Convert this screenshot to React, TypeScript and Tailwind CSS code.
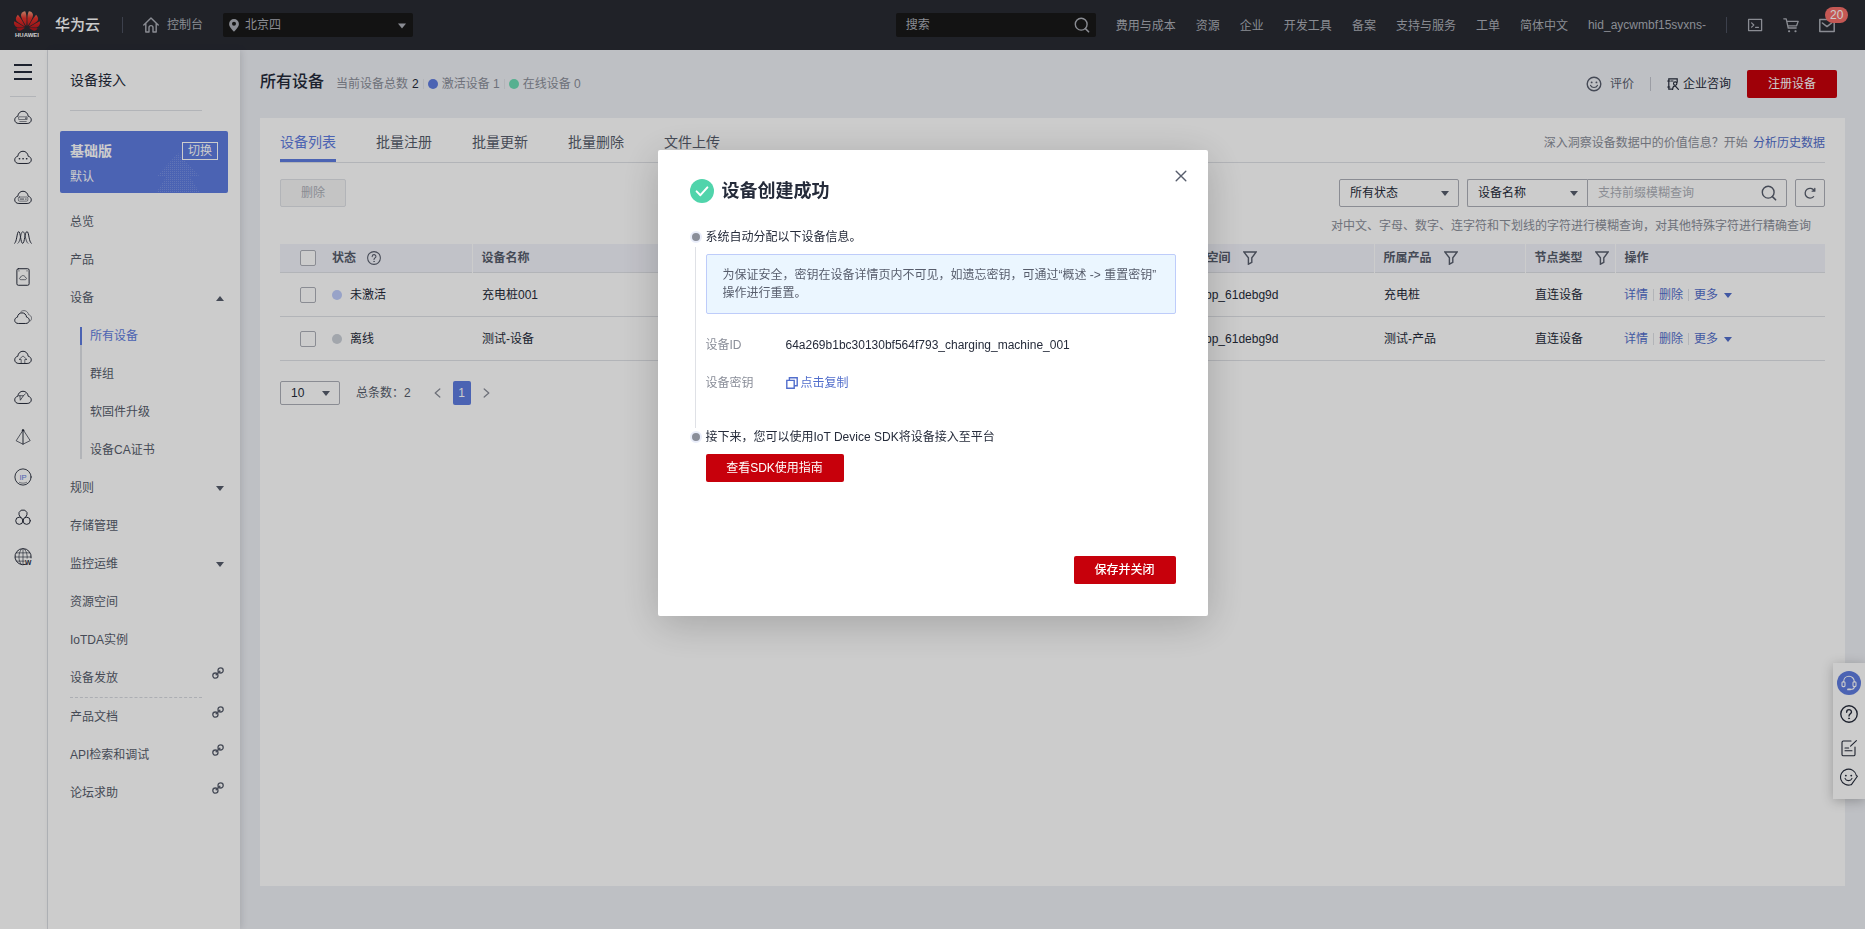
import { useState } from "react";
import type { ReactNode } from "react";
import { SiHuawei } from "react-icons/si";

interface IconProps {
  className?: string;
  children: ReactNode;
  box?: string;
}

function Icon({ className = "w-[18px] h-[18px]", children, box = "0 0 20 20" }: IconProps) {
  return (
    <svg
      viewBox={box}
      className={`${className} flex-shrink-0`}
      fill="none"
      stroke="currentColor"
      strokeWidth="1.1"
      strokeLinecap="round"
      strokeLinejoin="round"
      aria-hidden="true"
    >
      {children}
    </svg>
  );
}

function Caret({ up = false, className = "w-2 h-[5px]" }: { up?: boolean; className?: string }) {
  return (
    <svg viewBox="0 0 8 5" className={`${className} flex-shrink-0`} fill="currentColor" aria-hidden="true">
      <path d={up ? "M0 5 L4 0 L8 5Z" : "M0 0 L4 5 L8 0Z"} />
    </svg>
  );
}

const CLOUD = "M5 17.2 C2.6 17.2 0.8 15.4 0.8 13.2 C0.8 11.2 2.2 9.6 4.2 9.2 C4.6 5.8 7 3.6 10 3.6 C13 3.6 15.4 5.8 15.8 9.2 C17.8 9.6 19.2 11.2 19.2 13.2 C19.2 15.4 17.4 17.2 15 17.2 Z";

function SearchIcon() {
  return (
    <Icon className="w-4 h-4" box="0 0 16 16">
      <circle cx="7.2" cy="7.2" r="5.9" strokeWidth="1.4" />
      <path d="M11.4 11.6 L14.6 14.8" strokeWidth="1.6" />
    </Icon>
  );
}

function FilterIcon() {
  return (
    <Icon className="w-[14px] h-[14px]" box="0 0 14 14">
      <path d="M0.8 1 H13.2 L8.8 6.8 V11.4 L5.4 13.2 V6.8 Z" strokeWidth="1.4" strokeLinejoin="miter" />
    </Icon>
  );
}

function HelpIcon({ className = "w-[14px] h-[14px]" }: { className?: string }) {
  return (
    <Icon className={className} box="0 0 16 16">
      <circle cx="8" cy="8" r="7.3" strokeWidth="1.2" />
      <path d="M5.9 6.4 C5.9 3.4 10.2 3.5 10.2 6.2 C10.2 7.8 8 7.9 8 9.8" strokeWidth="1.2" />
      <circle cx="8" cy="11.9" r="0.5" fill="currentColor" strokeWidth="0.6" />
    </Icon>
  );
}

function LinkIcon() {
  return (
    <Icon className="w-3 h-3" box="0 0 12 12">
      <circle cx="3.4" cy="8.6" r="2.6" strokeWidth="1.3" />
      <circle cx="8.6" cy="3.4" r="2.6" strokeWidth="1.3" />
      <path d="M4.2 7.8 L7.8 4.2" strokeWidth="1.5" />
    </Icon>
  );
}

const railIcons: { name: string; drawing: ReactNode }[] = [
  {
    name: "弹性云服务器",
    drawing: (
      <>
        <path d={CLOUD} />
        <path d="M5.6 9.8 H14.6 V12.8 H5.6 Z M6.4 15 H13.6" strokeWidth="0.6" />
        <path d="M12.8 11.3 h0.8" />
      </>
    ),
  },
  {
    name: "云耀服务器",
    drawing: (
      <>
        <path d={CLOUD} />
        <path d="M6 12 h0.2 M10 12 h0.2 M14 12 h0.2" strokeWidth="1.8" />
      </>
    ),
  },
  {
    name: "裸金属服务器",
    drawing: (
      <>
        <path d={CLOUD} />
        <rect x="4.8" y="10" width="10.6" height="4.6" rx="1.2" strokeWidth="0.6" />
        <path d="M6.8 12.3 h4 M12.8 12.3 h0.8" strokeWidth="0.9" />
      </>
    ),
  },
  {
    name: "弹性伸缩",
    drawing: (
      <>
        <path d="M0.8 17 C3.2 16 3.2 4 5.2 4 C7.4 4 7.2 17 9.6 17 C12 17 11.8 4 14.4 4 C16.8 4 16.4 16 19.2 17" />
        <path d="M4.4 17 C7.6 15 7.2 4 9.8 4 C12.6 4 12.4 15 15.4 17" strokeWidth="0.8" />
      </>
    ),
  },
  {
    name: "云硬盘",
    drawing: (
      <>
        <rect x="3.2" y="0.8" width="13.6" height="18.4" rx="1.6" />
        <path d="M7.6 13 C5.6 13 5.6 10.6 7.4 10.4 C7.8 7.8 12 7.8 12.6 10.4 C14.4 10.6 14.4 13 12.4 13 Z" strokeWidth="0.7" />
        <path d="M5.4 3.2 h0.2 M14.4 3.2 h0.2" strokeWidth="0.9" />
      </>
    ),
  },
  {
    name: "对象存储",
    drawing: (
      <>
        <path d="M4.4 17.2 C2.4 17.2 0.8 15.7 0.8 13.7 C0.8 11.9 2 10.6 3.8 10.2 C4.2 7.2 6.2 5.4 8.9 5.4 C11.5 5.4 13.6 7.2 14 10.2 C15.8 10.6 17 11.9 17 13.7 C17 15.7 15.4 17.2 13.4 17.2 Z" />
        <path d="M7.4 4.4 C10 1.2 15.4 3 16.2 7.4 C20 8.4 20.6 13 18 14.6" strokeWidth="0.6" />
      </>
    ),
  },
  {
    name: "云备份",
    drawing: (
      <>
        <path d={CLOUD} />
        <path d="M8 16.6 V12.8 H5.6 L10 8.8 L14.4 12.8 H12 V16.6" strokeWidth="0.7" />
      </>
    ),
  },
  {
    name: "内容分发",
    drawing: (
      <>
        <path d={CLOUD} />
        <path d="M5.4 8.6 L10.4 8.6 L7 13.6 L6.6 8.8 M10.4 8.6 L12.6 6.6" strokeWidth="0.8" />
      </>
    ),
  },
  {
    name: "虚拟私有云",
    drawing: (
      <>
        <path d="M10 2.4 L2.4 14.2 L10 18 L17.6 14.2 Z" strokeWidth="0.8" />
        <path d="M10 2.4 V18" strokeWidth="1.1" />
        <circle cx="10" cy="2.6" r="0.8" fill="currentColor" />
      </>
    ),
  },
  {
    name: "弹性公网",
    drawing: (
      <>
        <circle cx="10" cy="10" r="9" strokeWidth="1" />
        <path d="M6 16 C8 17.2 12 17.2 14 16" strokeWidth="0.6" />
        <text x="10" y="13" textAnchor="middle" fontSize="8.5" fill="#5e7ce0" stroke="none">
          IP
        </text>
      </>
    ),
  },
  {
    name: "云容器",
    drawing: (
      <>
        <path d="M7.4 10.6 L5.6 7.6 V5 L8 2.4 H12 L14.4 5 V7.6 L12.6 10.6" />
        <circle cx="5.9" cy="14.2" r="4" />
        <circle cx="14.1" cy="14.2" r="4" />
      </>
    ),
  },
  {
    name: "域名注册",
    drawing: (
      <>
        <path d="M13 18.2 A9 9 0 1 1 19 11" />
        <path d="M10 1.2 V18.4 M1.4 10 H18.8 M3 5.4 H17 M3 14.6 H11.4" strokeWidth="0.7" />
        <path d="M8 1.6 C4.6 6 4.6 14 8 18.2 M12 1.6 C14 4.4 15 8 14.6 11.4" strokeWidth="0.7" />
        <text x="12.2" y="18.6" fontSize="7.5" fontWeight="bold" fill="currentColor" stroke="none">
          W
        </text>
      </>
    ),
  },
];

const topLinks = ["费用与成本", "资源", "企业", "开发工具", "备案", "支持与服务", "工单", "简体中文"];

function TopBar() {
  return (
    <header className="h-[50px] flex-shrink-0 bg-[#282b33] text-[#adb0b8] flex items-center">
      <a href="#" className="ml-[14px] w-[26px] flex flex-col items-center text-white" aria-label="HUAWEI">
        <svg className="absolute w-0 h-0" aria-hidden="true">
          <defs>
            <linearGradient id="petal" x1="0" y1="0" x2="0" y2="1">
              <stop offset="0" stopColor="#f0a080" />
              <stop offset="0.35" stopColor="#e4322b" />
              <stop offset="1" stopColor="#b5121b" />
            </linearGradient>
          </defs>
        </svg>
        <SiHuawei className="w-[26px] h-5" viewBox="0 3 24 18" fill="url(#petal)" />
        <span className="text-[6px] leading-[8px] font-bold text-white">HUAWEI</span>
      </a>
      <span className="ml-[15px] text-[15px] font-medium text-white whitespace-nowrap">华为云</span>
      <span className="ml-[22px] w-px h-4 bg-[#4c5160]" />
      <a href="#" className="ml-5 flex items-center gap-2 whitespace-nowrap">
        <Icon className="w-4 h-4" box="0 0 16 16">
          <path d="M0.8 8 L8 1 L15.2 8 M2.8 6.4 V15 H6 V10.6 A2 2 0 0 1 10 10.6 V15 H13.2 V6.4" strokeWidth="1.4" />
        </Icon>
        控制台
      </a>
      <div className="relative ml-5 w-[190px]">
        <svg viewBox="0 0 10 13" className="absolute left-[6px] top-[6px] w-[10px] h-[13px]" fill="#adb0b8" aria-hidden="true">
          <path fillRule="evenodd" d="M5 0 A4.9 4.9 0 0 0 0.1 4.9 C0.1 8 3.4 10.6 5 12.8 C6.6 10.6 9.9 8 9.9 4.9 A4.9 4.9 0 0 0 5 0 Z M5 2.8 A2 2 0 1 1 5 6.8 A2 2 0 1 1 5 2.8 Z" />
        </svg>
        <select aria-label="区域" className="appearance-none w-full h-6 pl-[22px] rounded-xs bg-[#181818] outline-none">
          <option>北京四</option>
        </select>
        <Caret className="absolute right-[7px] top-[10px] w-2 h-[6px]" />
      </div>

      <div className="ml-auto w-[200px] h-6 pl-[10px] pr-1.5 bg-[#181818] rounded-xs flex items-center">
        <input aria-label="搜索" placeholder="搜索" className="flex-1 min-w-0 bg-transparent outline-none placeholder:text-[#adb0b8]" />
        <SearchIcon />
      </div>
      <nav className="ml-5 flex items-center gap-5 whitespace-nowrap">
        {topLinks.map((link) => (
          <a key={link} href="#" className="pt-[2px]">
            {link}
          </a>
        ))}
        <a href="#">hid_aycwmbf15svxns-</a>
      </nav>
      <span className="ml-5 w-px h-4 bg-[#4c5160]" />
      <div className="flex items-center ml-5 mr-[30px] gap-5">
        <button aria-label="命令行" className="w-4">
          <Icon className="w-4 h-4" box="0 0 16 16">
            <rect x="1.6" y="2.4" width="13" height="11.2" strokeWidth="1.3" />
            <path d="M4.6 5.8 L6.8 8 L4.6 10.2 M8.6 10.4 H11.4" strokeWidth="1.2" />
          </Icon>
        </button>
        <button aria-label="购物车" className="w-4">
          <Icon className="w-4 h-4" box="0 0 16 16">
            <path d="M0.8 1.8 H3.2 L5.2 11 H13.2 M3.8 4.4 H15.2 L13.6 8.8 H4.8" strokeWidth="1.3" />
            <path d="M6 14.2 h0.2 M12.4 14.2 h0.2" strokeWidth="2" />
          </Icon>
        </button>
        <button aria-label="消息" className="relative w-4">
          <Icon className="w-4 h-4" box="0 0 16 16">
            <path d="M0.8 2.6 H15.2 V14.4 H0.8 Z M3.4 6 L8 9.6 L12.6 6" strokeWidth="1.5" />
          </Icon>
          <span className="absolute left-[6px] -top-[10px] h-4 px-[5px] rounded-full bg-[#f66f6a] text-white text-xs leading-4">20</span>
        </button>
      </div>
    </header>
  );
}

function Rail() {
  return (
    <aside className="w-12 flex-shrink-0 pr-px bg-white border-r border-[#dfe1e6] flex flex-col items-center text-[#252b3a]">
      <button aria-label="菜单" className="mt-[14px] w-[18px] flex flex-col gap-[5px]">
        <span className="h-[2px] w-full bg-[#252b3a]" />
        <span className="h-[2px] w-full bg-[#252b3a]" />
        <span className="h-[2px] w-full bg-[#252b3a]" />
      </button>
      <span className="mt-4 w-[26px] h-px bg-[#dfe1e6]" />
      <div className="mt-[11px] flex flex-col gap-[22px]">
        {railIcons.map(({ name, drawing }) => (
          <button key={name} aria-label={name} className="w-[18px] h-[18px]">
            <Icon>{drawing}</Icon>
          </button>
        ))}
      </div>
    </aside>
  );
}

interface MenuItemProps {
  label: string;
  caret?: "up" | "down";
  external?: boolean;
}

function MenuItem({ label, caret, external }: MenuItemProps) {
  return (
    <a href="#" className="h-[38px] pr-1 flex items-center justify-between">
      {label}
      {caret && <Caret up={caret === "up"} />}
      {external && (
        <span className="self-start mt-2">
          <LinkIcon />
        </span>
      )}
    </a>
  );
}

const deviceMenu = ["群组", "软固件升级", "设备CA证书"];

function SideMenu() {
  return (
    <aside className="relative w-48 flex-shrink-0 bg-white shadow-[2px_0_6px_rgba(37,43,58,0.12)] text-[#575d6c]">
      <h2 className="mt-[20px] ml-[22px] text-sm text-[#252b3a]">设备接入</h2>
      <div className="mt-5 ml-[22px] w-[132px] h-px bg-[#dfe1e6]" />
      <div className="relative mt-5 mx-3 h-[62px] px-[10px] rounded-xs bg-[#5e7ce0] text-white overflow-hidden">
        <svg viewBox="0 0 44 40" className="absolute right-[28px] bottom-0 w-11 h-10" aria-hidden="true">
          <defs>
            <pattern id="dots" width="2" height="2" patternUnits="userSpaceOnUse">
              <rect width="1" height="1" fill="#fff" opacity="0.16" />
            </pattern>
          </defs>
          <path d="M22 0 L44 24 H34 L44 40 H0 L10 24 H0 Z" fill="url(#dots)" />
        </svg>
        <div className="relative pt-[11px] flex items-center justify-between">
          <span className="text-sm leading-[18px] font-bold">基础版</span>
          <button className="w-9 h-[18px] border border-white leading-4">切换</button>
        </div>
        <p className="mt-2 leading-[18px]">默认</p>
      </div>
      <nav className="mt-[10px] ml-[22px] mr-3">
        <MenuItem label="总览" />
        <MenuItem label="产品" />
        <MenuItem label="设备" caret="up" />
        <div className="my-[10px] ml-[10px] border-l-2 border-[#dfe1e6] flex flex-col gap-5 leading-[18px]">
          <a href="#" className="-ml-[2px] border-l-2 border-[#5e7ce0] pl-2 text-[#5e7ce0]">
            所有设备
          </a>
          {deviceMenu.map((item) => (
            <a key={item} href="#" className="pl-2">
              {item}
            </a>
          ))}
        </div>
        <MenuItem label="规则" caret="down" />
        <MenuItem label="存储管理" />
        <MenuItem label="监控运维" caret="down" />
        <MenuItem label="资源空间" />
        <MenuItem label="IoTDA实例" />
        <MenuItem label="设备发放" external />
        <div className="w-[132px] border-t border-dashed border-[#d8dae0]" />
        <MenuItem label="产品文档" external />
        <MenuItem label="API检索和调试" external />
        <MenuItem label="论坛求助" external />
      </nav>
    </aside>
  );
}

function PageTitle() {
  return (
    <div className="h-[68px] pr-2 flex items-center justify-between">
      <div className="flex items-center text-[#8a8e99]">
        <h1 className="text-base font-medium text-[#252b3a] mr-3 pb-1">所有设备</h1>
        当前设备总数
        <span className="ml-1 text-[#252b3a]">2</span>
        <span className="mx-1 w-px h-[10px] bg-[#dfe1e6]" />
        <span className="mr-1 w-[10px] h-[10px] rounded-full bg-[#5e7ce0]" />
        激活设备 1
        <span className="mx-1 w-px h-[10px] bg-[#dfe1e6]" />
        <span className="mr-1 w-[10px] h-[10px] rounded-full bg-[#6cdcb4]" />
        在线设备 0
      </div>
      <div className="flex items-center text-[#575d6c]">
        <a href="#" className="flex items-center gap-2">
          <Icon className="w-4 h-4" box="0 0 16 16">
            <circle cx="8" cy="8" r="6.8" strokeWidth="1.4" />
            <path d="M4.6 9.4 C5.8 12.2 10.2 12.2 11.4 9.4" strokeWidth="1.2" />
            <path d="M5.6 6.4 h0.1 M10.4 6.4 h0.1" strokeWidth="1.8" />
          </Icon>
          评价
        </a>
        <span className="mx-4 w-px h-[14px] bg-[#c2c5cd]" />
        <a href="#" className="flex items-center gap-1 text-[#252b3a]">
          <Icon className="w-3 h-3" box="0 0 12 12">
            <path d="M10.2 4.2 V0.8 H1.8 V11.2 H4.6 M0.7 3 H2.8 M0.7 9 H2.8 M4 3 H6" strokeWidth="1.2" strokeLinejoin="miter" />
            <circle cx="8.2" cy="5.6" r="1.7" strokeWidth="1.1" />
            <path d="M5.6 11.4 C5.8 8.8 7 7.8 8.2 7.8 L11.4 11.4" strokeWidth="1.2" />
          </Icon>
          企业咨询
        </a>
        <button className="ml-4 w-[90px] h-7 rounded-xs bg-[#c7000b] text-white">注册设备</button>
      </div>
    </div>
  );
}

interface Device {
  status: string;
  dot: string;
  name: string;
  space: string;
  product: string;
  type: string;
}

const devices: Device[] = [
  { status: "未激活", dot: "bg-[#beccfa]", name: "充电桩001", space: "DefaultApp_61debg9d", product: "充电桩", type: "直连设备" },
  { status: "离线", dot: "bg-[#cbd0d8]", name: "测试-设备", space: "DefaultApp_61debg9d", product: "测试-产品", type: "直连设备" },
];

function Tick({ label }: { label: string }) {
  return (
    <input
      type="checkbox"
      aria-label={label}
      className="block ml-5 w-4 h-4 appearance-none border border-[#adb0b8] rounded-xs bg-white checked:bg-[#5e7ce0]"
    />
  );
}

function DeviceTable() {
  return (
    <table className="mt-[9px] w-full table-fixed text-left">
      <colgroup>
        <col className="w-[52px]" />
        <col className="w-[140px]" />
        <col />
        <col className="w-[225px]" />
        <col className="w-[151px]" />
        <col className="w-[90px]" />
        <col className="w-[210px]" />
      </colgroup>
      <thead>
        <tr className="h-7 bg-[#f2f3fa] border-b border-[#dfe1e6] text-[#575d6c]">
          <th>
            <Tick label="全选" />
          </th>
          <th className="border-r border-white">
            <span className="flex items-center gap-[11px]">
              状态 <HelpIcon />
            </span>
          </th>
          <th className="pl-[9px] border-r border-white">设备名称</th>
          <th className="pl-[9px] border-r border-white">
            <span className="flex items-center gap-3">
              所属资源空间 <FilterIcon />
            </span>
          </th>
          <th className="pl-[9px] border-r border-white">
            <span className="flex items-center gap-3">
              所属产品 <FilterIcon />
            </span>
          </th>
          <th className="pl-[9px] border-r border-white">
            <span className="flex items-center gap-3">
              节点类型 <FilterIcon />
            </span>
          </th>
          <th className="pl-[9px]">操作</th>
        </tr>
      </thead>
      <tbody>
        {devices.map((device) => (
          <tr key={device.name} className="h-11 border-b border-[#dfe1e6] text-[#252b3a]">
            <td className="pt-[2px]">
              <Tick label={device.name} />
            </td>
            <td className="pt-[2px]">
              <span className="flex items-center gap-2">
                <span className={`w-[10px] h-[10px] rounded-full ${device.dot}`} />
                {device.status}
              </span>
            </td>
            <td className="pl-[10px] pt-[2px]">{device.name}</td>
            <td className="pl-[10px] pt-[2px]">{device.space}</td>
            <td className="pl-[10px] pt-[2px]">{device.product}</td>
            <td className="pl-[10px] pt-[2px]">{device.type}</td>
            <td className="pl-[9px] pt-[2px]">
              <span className="flex items-center gap-[5px] text-[#526ecc]">
                <a href="#">详情</a>
                <span className="w-px h-3 bg-[#dfe1e6]" />
                <a href="#">删除</a>
                <span className="w-px h-3 bg-[#dfe1e6]" />
                <a href="#" className="flex items-center gap-1.5">
                  更多 <Caret />
                </a>
              </span>
            </td>
          </tr>
        ))}
      </tbody>
    </table>
  );
}

const tabs = ["设备列表", "批量注册", "批量更新", "批量删除", "文件上传"];

function DeviceCard() {
  const [tab, setTab] = useState(tabs[0]);

  return (
    <section className="flex-1 bg-white px-5 text-[#575d6c]">
      <div className="h-[45px] border-b border-[#dfe1e6] flex justify-between">
        <div role="tablist" className="flex gap-10 text-sm">
          {tabs.map((name) => (
            <button
              key={name}
              role="tab"
              aria-selected={tab === name}
              onClick={() => setTab(name)}
              className={`pt-[6px] border-b-3 ${tab === name ? "border-[#5e7ce0] text-[#5e7ce0]" : "border-transparent"}`}
            >
              {name}
            </button>
          ))}
        </div>
        <p className="pt-[5px] self-center text-[#8a8e99]">
          深入洞察设备数据中的价值信息？开始{" "}
          <a href="#" className="ml-[2px] text-[#526ecc]">
            分析历史数据
          </a>
        </p>
      </div>

      <div className="mt-4 flex items-center justify-between">
        <button disabled className="w-[66px] h-7 rounded-xs border border-[#dfe1e6] bg-[#f5f5f6] text-[#adb0b8]">
          删除
        </button>
        <div className="flex items-center gap-2">
          <div className="relative">
            <select aria-label="状态" className="appearance-none w-[120px] h-7 pl-[10px] border border-[#adb0b8] rounded-xs text-[#252b3a]">
              <option>所有状态</option>
            </select>
            <Caret className="absolute right-[10px] top-[12px] w-2 h-[5px]" />
          </div>
          <div className="flex">
            <div className="relative">
              <select aria-label="查询字段" className="appearance-none w-[120px] h-7 pl-[10px] border border-r-0 border-[#adb0b8] rounded-l-xs text-[#252b3a]">
                <option>设备名称</option>
              </select>
              <Caret className="absolute right-[9px] top-[12px] w-2 h-[5px]" />
            </div>
            <div className="w-[200px] h-7 pl-[10px] pr-[9px] border border-[#adb0b8] rounded-r-xs flex items-center">
              <input aria-label="查询" placeholder="支持前缀模糊查询" className="flex-1 min-w-0 outline-none placeholder:text-[#adb0b8]" />
              <SearchIcon />
            </div>
          </div>
          <button aria-label="刷新" className="w-[30px] h-7 border border-[#adb0b8] rounded-xs flex items-center justify-center">
            <Icon className="w-3 h-3" box="0 0 12 12">
              <path d="M9.6 9.6 A4.9 4.9 0 1 1 10.2 3.6 M10.8 1.4 V4.2 H8.2" strokeWidth="1.3" />
            </Icon>
          </button>
        </div>
      </div>
      <p className="mt-[10px] pr-[14px] leading-[18px] text-right text-[#8a8e99]">
        对中文、字母、数字、连字符和下划线的字符进行模糊查询，对其他特殊字符进行精确查询
      </p>

      <DeviceTable />

      <div className="mt-5 flex items-center">
        <div className="relative">
          <select aria-label="每页条数" className="appearance-none w-[60px] h-6 pl-[10px] border border-[#adb0b8] rounded-xs text-[#252b3a]">
            <option>10</option>
          </select>
          <Caret className="absolute right-[10px] top-[10px] w-2 h-[5px]" />
        </div>
        <span className="ml-4">总条数：2</span>
        <button aria-label="上一页" className="ml-[23px] text-[#8a8e99]">
          <Icon className="w-[7px] h-[10px]" box="0 0 7 10">
            <path d="M5.8 1 L1.2 5 L5.8 9" strokeWidth="1.3" />
          </Icon>
        </button>
        <button className="mx-3 w-[18px] h-6 rounded-xs bg-[#5e7ce0] text-white">1</button>
        <button aria-label="下一页" className="text-[#8a8e99]">
          <Icon className="w-[7px] h-[10px]" box="0 0 7 10">
            <path d="M1.2 1 L5.8 5 L1.2 9" strokeWidth="1.3" />
          </Icon>
        </button>
      </div>
    </section>
  );
}

function FloatTools() {
  return (
    <div className="fixed right-0 bottom-[130px] w-8 h-[136px] pt-2 bg-white shadow-[0_2px_12px_rgba(0,0,0,0.25)] flex flex-col items-center text-[#252b3a]">
      <button aria-label="客服" className="w-6 h-6 rounded-full bg-[#5e7ce0] text-white flex items-center justify-center">
        <Icon className="w-4 h-4" box="0 0 16 16">
          <path d="M2.6 7 C2.6 -0.6 13.4 -0.6 13.4 7 M13.4 11.4 C13.4 13.4 11.4 14.4 9.4 14.4" />
          <rect x="1" y="6.8" width="3" height="4.8" rx="1" />
          <rect x="12" y="6.8" width="3" height="4.8" rx="1" />
          <path d="M7 14.4 h2" strokeWidth="1.8" />
        </Icon>
      </button>
      <button aria-label="帮助" className="mt-[10px]">
        <HelpIcon className="w-[18px] h-[18px]" />
      </button>
      <button aria-label="反馈" className="mt-4">
        <Icon className="w-[18px] h-[18px]" box="0 0 18 18">
          <path d="M11 2 H3.4 Q2 2 2 3.4 V15.4 Q2 16.8 3.4 16.8 H13.6 Q15 16.8 15 15.4 V8" />
          <path d="M5 9 H8.6 M5 11.8 H12 M10.6 7.2 L16.4 1.6" />
        </Icon>
      </button>
      <button aria-label="评价" className="mt-[11px]">
        <Icon className="w-[18px] h-[18px]" box="0 0 18 18">
          <path d="M11.4 16.6 A8 8 0 1 1 16.4 7.6 L17.4 8.2 L11.4 16.6" />
          <path d="M5 10.4 C6.2 13.4 10.8 13.4 12 10.4" />
          <path d="M5.8 7.6 h0.1 M11.2 7.6 h0.1" strokeWidth="1.8" />
        </Icon>
      </button>
    </div>
  );
}

function Bullet() {
  return <span className="block w-3 h-3 flex-shrink-0 rounded-full bg-[#8a8e99] border-2 border-[#e9edfa]" />;
}

function SuccessDialog({ onClose }: { onClose: () => void }) {
  return (
    <div className="fixed inset-0 bg-black/20 flex items-start justify-center pt-[150px]">
      <div
        role="dialog"
        aria-modal="true"
        aria-labelledby="dialog-title"
        className="relative w-[550px] px-8 pt-[29px] pb-8 rounded-xs bg-white shadow-[0_8px_40px_rgba(0,0,0,0.2)] text-[#252b3a]"
      >
        <button aria-label="关闭" onClick={onClose} className="absolute right-[21px] top-5 text-[#575d6c]">
          <Icon className="w-3 h-3" box="0 0 12 12">
            <path d="M1.2 1.2 L10.8 10.8 M10.8 1.2 L1.2 10.8" strokeWidth="1.4" />
          </Icon>
        </button>
        <div className="flex items-center gap-2">
          <Icon className="w-6 h-6" box="0 0 24 24">
            <circle cx="12" cy="12" r="12" fill="#50d4ab" stroke="none" />
            <path d="M6.6 12.4 L10.4 16.2 L17.4 8.4" stroke="#fff" strokeWidth="2" />
          </Icon>
          <h2 id="dialog-title" className="text-lg leading-6 font-bold">
            设备创建成功
          </h2>
        </div>

        <div className="mt-[25px] flex gap-1">
          <div className="flex flex-col items-center pt-[3px]">
            <Bullet />
            <span className="mt-1 flex-1 w-px bg-[#dfe1e6]" />
          </div>
          <div className="flex-1">
            <p className="leading-[18px]">系统自动分配以下设备信息。</p>
            <p className="mt-2 pl-4 pr-2 py-[11px] border border-[#beccfa] rounded-xs bg-[#ebf6ff] text-[#575d6c] leading-[18px]">
              为保证安全，密钥在设备详情页内不可见，如遗忘密钥，可通过“概述 -&gt; 重置密钥”
              <wbr />
              操作进行重置。
            </p>
            <dl className="mt-[22px] mb-9 grid grid-cols-[80px_1fr] gap-y-5 leading-[18px]">
              <dt className="text-[#8a8e99]">设备ID</dt>
              <dd>64a269b1bc30130bf564f793_charging_machine_001</dd>
              <dt className="text-[#8a8e99]">设备密钥</dt>
              <dd>
                <button className="flex items-center gap-[3px] text-[#526ecc]">
                  <Icon className="w-3 h-3" box="0 0 12 12">
                    <path d="M0.8 3.4 H8.2 V11.2 H0.8 Z M3.4 3 V0.8 H11.2 V8.8 H8.6" strokeWidth="1.4" strokeLinejoin="miter" />
                  </Icon>
                  点击复制
                </button>
              </dd>
            </dl>
          </div>
        </div>
        <div className="flex gap-1">
          <div className="pt-[3px]">
            <Bullet />
          </div>
          <div>
            <p className="leading-[18px]">接下来，您可以使用IoT Device SDK将设备接入至平台</p>
            <button className="mt-2 w-[138px] h-7 rounded-xs bg-[#c7000b] text-white">查看SDK使用指南</button>
          </div>
        </div>

        <div className="mt-[74px] flex justify-end">
          <button onClick={onClose} className="w-[102px] h-7 rounded-xs bg-[#c7000b] text-white font-medium">
            保存并关闭
          </button>
        </div>
      </div>
    </div>
  );
}

export default function App() {
  const [open, setOpen] = useState(true);

  return (
    <div className="min-h-screen flex flex-col bg-[#eef0f5] font-['Liberation_Sans','Noto_Sans_CJK_SC',sans-serif] text-xs">
      <TopBar />
      <div className="flex-1 flex">
        <Rail />
        <SideMenu />
        <main className="flex-1 min-w-0 pl-5 pr-5 pb-[43px] flex flex-col">
          <PageTitle />
          <DeviceCard />
        </main>
      </div>
      <FloatTools />
      {open && <SuccessDialog onClose={() => setOpen(false)} />}
    </div>
  );
}
